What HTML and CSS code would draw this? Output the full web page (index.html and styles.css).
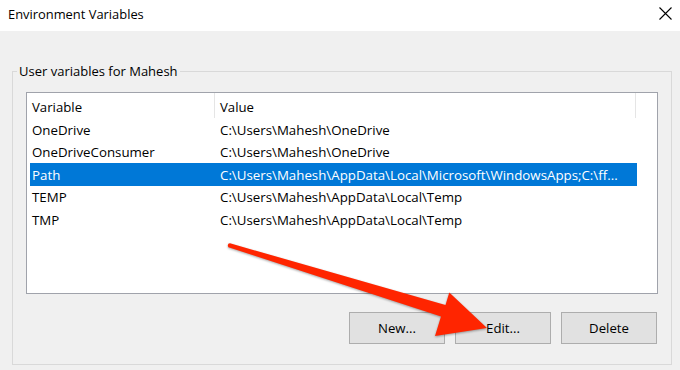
FILE: index.html
```html
<!DOCTYPE html>
<html>
<head>
<meta charset="utf-8">
<title>Environment Variables</title>
<link rel="stylesheet" href="styles.css">
</head>
<body>
<div class="window">
  <div class="titlebar">
    <span class="title">Environment Variables</span>
    <svg class="close" width="13" height="13" viewBox="0 0 13 13"><path d="M0.5 0.5 L12.5 12.5 M12.5 0.5 L0.5 12.5" stroke="#000" stroke-width="1.1" fill="none"/></svg>
  </div>
  <div class="content">
    <fieldset class="group">
      <legend class="group-label">User variables for Mahesh</legend>
      <div class="listview">
        <div class="lv-header">
          <div class="hcell hcell-var">Variable</div>
          <div class="hcell hcell-val">Value</div>
          <div class="hfill"></div>
        </div>
        <div class="lv-rows">
          <div class="row"><div class="cell">OneDrive</div><div class="cell">C:\Users\Mahesh\OneDrive</div></div>
          <div class="row"><div class="cell">OneDriveConsumer</div><div class="cell">C:\Users\Mahesh\OneDrive</div></div>
          <div class="row selected"><div class="cell">Path</div><div class="cell">C:\Users\Mahesh\AppData\Local\Microsoft\WindowsApps;C:\ff...</div></div>
          <div class="row"><div class="cell">TEMP</div><div class="cell">C:\Users\Mahesh\AppData\Local\Temp</div></div>
          <div class="row"><div class="cell">TMP</div><div class="cell">C:\Users\Mahesh\AppData\Local\Temp</div></div>
        </div>
      </div>
      <div class="buttons">
        <button class="btn">New...</button>
        <button class="btn">Edit...</button>
        <button class="btn">Delete</button>
      </div>
    </fieldset>
  </div>
  <svg class="arrow" width="680" height="370" viewBox="0 0 680 370">
    <path d="M230 243.3 L445.5 305 L449.3 292.5 L487 328 L435 336 L441 316.5 L230 247.7 A2.2 2.2 0 0 1 230 243.3 Z" fill="#ff2500"/>
  </svg>
</div>
</body>
</html>
```

FILE: styles.css
```css
* { box-sizing: border-box; }

html, body {
  margin: 0;
  padding: 0;
}

body {
  width: 680px;
  height: 370px;
  overflow: hidden;
  background: #f0f0f0;
  font-family: "Open Sans", "Liberation Sans", Arial, sans-serif;
  font-size: 13px;
  color: #000;
}

.window {
  position: relative;
  width: 680px;
  height: 370px;
}

.titlebar {
  height: 31px;
  background: #fff;
  display: flex;
  align-items: flex-start;
  justify-content: space-between;
  padding: 0 8px;
}

.title {
  margin-top: 6px;
  line-height: 16px;
  font-size: 12.9px;
}

.close {
  margin-top: 7px;
  display: block;
}

.content {
  padding: 0 8px 0 12px;
}

.group {
  margin: 32px 0 0 0;
  padding: 0 13px 20px 13px;
  border: 1px solid #d9d9d9;
  min-width: 0;
}

.group-label {
  margin-left: -9px;
  padding: 0 2px;
  line-height: 16px;
  font-size: 13px;
}

.listview {
  margin-top: 13px;
  height: 202px;
  background: #fff;
  border: 1px solid #a0a3ab;
  overflow: hidden;
}

.lv-header {
  display: flex;
  height: 25px;
}

.hcell {
  height: 25px;
  padding: 5.5px 0 0 5px;
  line-height: 16px;
  border-right: 1px solid #e5e5e5;
  white-space: nowrap;
  font-size: 13.2px;
}

.hcell-var { width: 188px; }
.hcell-val { width: 421px; }
.hfill { flex: 1; }

.lv-rows {
  margin: 0 20px 0 3px;
}

.row {
  display: grid;
  grid-template-columns: 188px 1fr;
  height: 22.5px;
}

.cell {
  padding: 3.5px 0 0 2px;
  line-height: 16px;
  white-space: nowrap;
  overflow: hidden;
  font-size: 13.3px;
}

.row.selected {
  background: #0078d7;
  color: #fff;
}

.buttons {
  display: flex;
  justify-content: flex-end;
  gap: 10px;
  margin-top: 18px;
  padding-right: 1px;
}

.btn {
  width: 96px;
  height: 32px;
  padding: 0;
  background: #e1e1e1;
  border: 1px solid #adadad;
  border-radius: 0;
  font-family: "Open Sans", "Liberation Sans", Arial, sans-serif;
  font-size: 13.2px;
  color: #000;
}

.arrow {
  position: absolute;
  left: 0;
  top: 0;
  pointer-events: none;
  filter: drop-shadow(0.8px 1px 0.8px rgba(0, 0, 0, 0.35));
}
```
